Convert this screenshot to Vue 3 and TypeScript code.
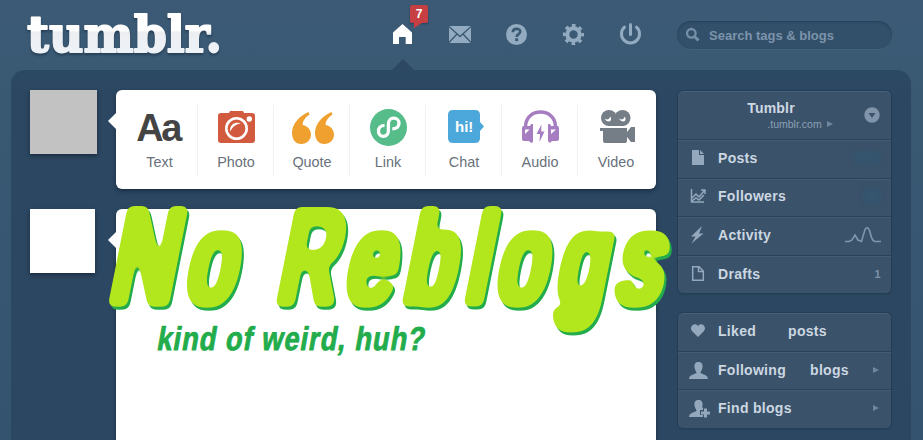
<script setup lang="ts">
interface Glyph { ch: string; x: number; sx: number; sy: number }

const tools = ['Text', 'Photo', 'Quote', 'Link', 'Chat', 'Audio', 'Video']

const title: Glyph[] = [
  { ch: 'N', x: 107.5, sx: 0.7, sy: 1.06 },
  { ch: 'o', x: 184.6, sx: 0.67, sy: 1 },
  { ch: 'R', x: 275.5, sx: 0.63, sy: 1.05 },
  { ch: 'e', x: 344, sx: 0.66, sy: 1 },
  { ch: 'b', x: 402.5, sx: 0.68, sy: 1.01 },
  { ch: 'l', x: 464.5, sx: 0.68, sy: 1.01 },
  { ch: 'o', x: 495, sx: 0.67, sy: 1 },
  { ch: 'g', x: 555.5, sx: 0.66, sy: 1 },
  { ch: 's', x: 615, sx: 0.68, sy: 1 },
]
</script>

<template>
  <div class="page">
    <header class="top">
      <svg class="logo" width="210" height="60" viewBox="20 5 210 60">
        <defs>
          <linearGradient id="logoFill" gradientUnits="userSpaceOnUse" x1="0" y1="12" x2="0" y2="54">
            <stop offset="0" stop-color="#fff" />
            <stop offset=".44" stop-color="#fff" />
            <stop offset=".48" stop-color="#eceef1" />
            <stop offset="1" stop-color="#eef3f8" />
          </linearGradient>
        </defs>
        <text x="27" y="52" textLength="195" lengthAdjust="spacingAndGlyphs" fill="url(#logoFill)" stroke="url(#logoFill)">tumblr.</text>
      </svg>
      <nav class="nav">
        <a class="item active">
          <svg width="34" height="34" viewBox="385 18 34 34"><path d="M402.500 24L412 32.500V44H405.700V37H399V44H393V32.500Z" fill="#fff" /></svg>
          <span class="badge">7</span>
          <span class="notch"></span>
        </a>
        <a class="item">
          <svg width="34" height="34" viewBox="442 18 34 34"><path d="M449 26H471V43H449Z" fill="#93abc1" /><path d="M449 26.500L460 36.500L471 26.500M449 42.500L457 34M471 42.500L463 34" fill="none" stroke="#3a5973" stroke-width="1.300" /></svg>
        </a>
        <a class="item">
          <svg width="34" height="34" viewBox="499 18 34 34"><circle cx="516.500" cy="34.500" r="10.500" fill="#93abc1" /><path d="M512.800 32.200C512.800 27.800 520.300 27.900 520.300 31.600C520.300 34.200 516.600 34 516.600 37" fill="none" stroke="#3a5973" stroke-width="2.600" /><rect x="515.200" y="38.300" width="2.900" height="2.800" fill="#3a5973" /></svg>
        </a>
        <a class="item">
          <svg width="34" height="34" viewBox="556 18 34 34"><circle cx="573.500" cy="34.500" r="6.200" fill="none" stroke="#93abc1" stroke-width="4" /><circle cx="573.500" cy="34.500" r="9.100" fill="none" stroke="#93abc1" stroke-width="3" stroke-dasharray="3.573 3.573" stroke-dashoffset="1.786" /></svg>
        </a>
        <a class="item">
          <svg width="34" height="34" viewBox="613 18 34 34"><path d="M624.500 27.200A9 9 0 1 0 636.500 27.200" fill="none" stroke="#93abc1" stroke-width="3" stroke-linecap="round" /><path d="M630.500 24.500V34.500" stroke="#93abc1" stroke-width="3" stroke-linecap="round" /></svg>
        </a>
      </nav>
      <div class="search">
        <svg width="16" height="16" viewBox="685 27 16 16"><circle cx="691.300" cy="33.300" r="4.300" fill="none" stroke="#7590a8" stroke-width="2.300" /><path d="M694.500 36.500L698.500 40.500" stroke="#7590a8" stroke-width="3" /></svg>
        <span>Search tags &amp; blogs</span>
      </div>
    </header>

    <main class="panel">
      <div class="avatars">
        <div class="avatar grey"></div>
        <div class="avatar white"></div>
      </div>

      <section class="feed">
        <div class="card composer">
          <div v-for="(t, i) in tools" :key="t" class="tool">
            <span v-if="i === 0" class="icon aa">Aa</span>
            <svg v-else-if="i === 1" class="icon" viewBox="206 105 60 44">
              <path d="M221 113H229L230 111H243L244 113H252Q255 113 255 116V140Q255 143 252 143H221Q218 143 218 140V116Q218 113 221 113Z" fill="#d25b3f" />
              <circle cx="236.500" cy="128.500" r="10.200" fill="none" stroke="#fff" stroke-width="2.600" />
              <path d="M230 131.500C229.500 123 237 121.500 241 123.500C236 124 232.500 127 230 131.500Z" fill="#fff" />
              <circle cx="249.300" cy="119" r="2.700" fill="#fff" />
            </svg>
            <svg v-else-if="i === 2" class="icon" viewBox="282 105 60 44">
              <path d="M308.500 112L309.500 114.500C305 117.500 302.500 121 302.500 125C307 125.500 311 129.500 311 134.500C311 140 306.700 144 301.500 144C295.500 144 292 139.500 292 133C292 124 299 116 308.500 112Z" fill="#efa02f" />
              <path d="M331.500 112L332.500 114.500C328 117.500 325.500 121 325.500 125C330 125.500 334 129.500 334 134.500C334 140 329.700 144 324.500 144C318.500 144 315 139.500 315 133C315 124 322 116 331.500 112Z" fill="#efa02f" />
            </svg>
            <svg v-else-if="i === 3" class="icon" viewBox="358 105 60 44">
              <circle cx="388.500" cy="127.500" r="18.500" fill="#56bc8a" />
              <path d="M384.500 125.300C380 125.300 378.500 128.500 378.500 131.200C378.500 134 380.500 136.300 383.300 136.300C386.600 136.300 388.400 133.800 388.400 130.800V124C388.400 120.500 390.500 118.200 393.700 118.200C396.800 118.200 399 120.500 399 123.300C399 126.400 396.800 128.900 392.300 128.900" fill="none" stroke="#fff" stroke-width="3.300" />
            </svg>
            <svg v-else-if="i === 4" class="icon" viewBox="434 105 60 44">
              <path d="M453 110H475Q480 110 480 115V122L484 126.500L480 131V138Q480 143 475 143H453Q448 143 448 138V115Q448 110 453 110Z" fill="#4ca7da" />
              <text x="455" y="131.500" class="hi">hi!</text>
            </svg>
            <svg v-else-if="i === 5" class="icon" viewBox="510 105 60 44">
              <path d="M525.500 127C525.500 107 555.500 107 555.500 127" fill="none" stroke="#a77dc2" stroke-width="3.500" />
              <path d="M524 126H530L531 124H533V142L531 143L529 141H524Q522 141 522 139V128Q522 126 524 126Z M551 126L550 124H548V141L550 143L552 141H557Q559 141 559 139V128Q559 126 557 126Z" fill="#a77dc2" />
              <path d="M525 129.500H529.500L525 134Z M551 129.500H556L551 134Z" fill="#fff" />
              <path d="M541.500 124.500L536.500 134H540L539.500 142L544.500 131.500H541.200Z" fill="#a77dc2" />
            </svg>
            <svg v-else class="icon" viewBox="586 105 60 44">
              <circle cx="609" cy="118" r="8" fill="#757d87" /><circle cx="622.500" cy="118" r="8" fill="#757d87" /><path d="M608 120H624V126H608Z M600 128H627V132L631 127H635V142H631L627 137V141Q627 143 625 143H605Q603 143 603 141V131H600Z" fill="#757d87" />
              <path d="M604.500 118.500Q608.500 121 610.500 116.500Q612 121 609 121.500Q606 121.500 604.500 118.500ZM619 118.500Q623 121 625 116.500Q626.500 121 623.500 121.500Q620.500 121.500 619 118.500Z" fill="#fff" />
            </svg>
            <span class="label">{{ t }}</span>
          </div>
        </div>
        <div class="card post">
          <svg class="lettering" width="580" height="175" viewBox="100 195 580 175">
            <defs>
              <filter id="roundFace" filterUnits="userSpaceOnUse" x="95" y="190" width="590" height="160" color-interpolation-filters="sRGB">
                <feMorphology in="SourceAlpha" operator="dilate" radius="3 0" />
                <feGaussianBlur stdDeviation="3" />
                <feComponentTransfer result="shape"><feFuncA type="linear" slope="9" intercept="-4.300" /></feComponentTransfer>
                <feOffset in="shape" dx="1.500" dy="3.200" result="low" />
                <feFlood flood-color="#22ac4b" />
                <feComposite in2="low" operator="in" result="green" />
                <feFlood flood-color="#b2e61d" />
                <feComposite in2="shape" operator="in" result="lime" />
                <feMerge><feMergeNode in="green" /><feMergeNode in="lime" /></feMerge>
              </filter>
            </defs>
            <g class="face" filter="url(#roundFace)">
              <text v-for="(g, i) in title" :key="i" :transform="`translate(${g.x} 301.500) skewX(-11.300) scale(${g.sx} ${g.sy})`">{{ g.ch }}</text>
            </g>
            <text class="sub" transform="translate(156 350) skewX(-10) scale(.82 1)" textLength="326">kind of weird, huh?</text>
          </svg>
        </div>
      </section>

      <aside class="side">
        <div class="box">
          <div class="blog">
            <div class="names"><strong>Tumblr</strong><small>.tumblr.com <i class="tri"></i></small></div>
            <svg class="drop" width="16" height="16" viewBox="0 0 16 16"><circle cx="8" cy="8" r="7.700" fill="#8195aa" /><path d="M4.500 6H11.500L8 11Z" fill="#3b536c" /></svg>
          </div>
          <div class="row"><svg viewBox="688 147 22 22"><path d="M692 150H699V155H704V165H692Z M700 150L704 154H700Z" /></svg><b>Posts</b><span class="smudge wide"></span></div>
          <div class="row"><svg viewBox="688 186 22 22"><path class="ln" d="M691.500 190V203H704M692 199L696 195L699 198L704.500 191.500M701 191H705V195M692 202L696 199L699 201L704 196" /></svg><b>Followers</b><span class="smudge"></span></div>
          <div class="row"><svg viewBox="688 224 22 22"><path d="M702 226L691 236.500H695.500L691.500 243.500L703.500 233.500H699L702 226Z" /></svg><b>Activity</b><svg class="spark" viewBox="844 225 38 20"><path class="ln" d="M845 241.500H849L852 240L855 235L858 240L861.500 241.500L865 229.500Q868 225 870 232Q872 241.500 875 241.500H881" /></svg></div>
          <div class="row last"><svg viewBox="688 263 22 22"><path class="ln" d="M692.700 266.700H699L703.300 271V280.300H692.700ZM698.500 267V271.500H703" /></svg><b>Drafts</b><span class="count">1</span></div>
        </div>
        <div class="box second">
          <div class="row"><svg viewBox="688 321 22 22"><path d="M698 338L692 332C688.500 327.500 695 322.500 698 327C701 322.500 707.500 327.500 704 332Z" /></svg><b class="gap1">Liked</b><b>posts</b></div>
          <div class="row"><svg viewBox="688 359 22 22"><path d="M698.500 362C701.500 362 703 364 702.500 367.500C702 370.500 700.500 371.500 700.500 373C703 374.500 708 375 708 379H689C689 375 694 374.500 696.500 373C696.500 371.500 695 370.500 694.500 367.500C694 364 695.500 362 698.500 362Z" /></svg><b class="gap2">Following</b><b>blogs</b><i class="tri end"></i></div>
          <div class="row"><svg viewBox="688 398 22 22"><path d="M698.500 401C701.500 401 703 403 702.500 406.500C702 409.500 700.500 410.500 700.500 412L701 408.500H703V411H700V416H703V418H689C689 414 694 413.500 696.500 412C696.500 410.500 695 409.500 694.500 406.500C694 403 695.500 401 698.500 401Z M704 409.500H707V412.500H710V415.500H707V418.500H704V415.500H701V412.500H704Z" /></svg><b>Find blogs</b><i class="tri end"></i></div>
        </div>
      </aside>
    </main>
  </div>
</template>

<style>
body { margin: 0; overflow: hidden; }
</style>

<style scoped>
.page { width: 923px; height: 440px; overflow: hidden; background: linear-gradient(#3c5a75, #395973 25%, #33536f); font-family: "Liberation Sans", Arial, sans-serif; display: flex; flex-direction: column; }
.top { height: 70px; flex: none; display: flex; align-items: flex-start; }
.logo { margin: 5px 0 0 20px; flex: none; overflow: visible; font: bold 51px "DejaVu Serif", serif; stroke-width: 2; stroke-linejoin: round; filter: drop-shadow(0 2px 1px rgba(22, 42, 64, .55)); }
.nav { display: flex; gap: 23px; margin: 18px 0 0 155px; }
.item { position: relative; width: 34px; height: 34px; }
.item svg { display: block; }
.badge { position: absolute; left: 25px; top: -13px; width: 18px; height: 18px; border-radius: 2px; background: #c63f43; box-shadow: 0 1px 2px #263e58; color: #fff; font: bold 12px/19px "Liberation Sans", sans-serif; text-align: center; }
.badge::after { content: ""; position: absolute; left: 4px; top: 18px; border: 0 solid transparent; border-top: 5px solid #c63f43; border-right-width: 8px; }
.notch { position: absolute; left: 6px; top: 41px; border: 12px solid transparent; border-top-width: 0; border-bottom-color: #2c4863; }
.search { width: 175px; height: 28px; margin: 21px 0 0 30px; padding: 0 32px 0 8px; border-radius: 14px; background: #33506a; box-shadow: inset 0 1px 2px #243e57, 0 1px 0 #446179; display: flex; align-items: center; gap: 8px; color: #7c93aa; font-size: 13px; font-weight: bold; white-space: nowrap; }
.search svg { flex: none; }
.panel { width: 900px; height: 370px; margin-left: 11px; border-radius: 14px 14px 0 0; background: linear-gradient(#2c4964, #2c4761 30px); display: flex; box-sizing: border-box; padding: 20px 20px 0 19px; }
.avatars { width: 86px; flex: none; display: flex; flex-direction: column; gap: 55px; }
.avatar { width: 67px; height: 64px; background: #c2c2c2; box-shadow: 0 2px 4px #192d42; }
.white { width: 65px; background: #fff; }
.feed { width: 540px; flex: none; display: flex; flex-direction: column; gap: 20px; }
.card { position: relative; background: #fff; border-radius: 6px; box-shadow: 0 2px 4px #192d42; box-sizing: border-box; }
.card::before { content: ""; position: absolute; left: -8px; top: 23px; border: 8px solid transparent; border-left-width: 0; border-right-color: #fff; }
.composer { height: 99px; flex: none; display: flex; padding: 15px 2px 0 5px; }
.tool { width: 76px; height: 72px; display: flex; flex-direction: column; align-items: center; position: relative; }
.tool + .tool { border-left: 1px solid #f0f1f2; width: 75px; }
.icon { width: 60px; height: 44px; flex: none; }
.aa { margin-right: 2px; font: bold 38px/46px "Liberation Sans", sans-serif; letter-spacing: -2.500px; color: #444; text-align: center; }
.hi { font: bold 15px "Liberation Sans", sans-serif; fill: #fff; }
.label { font-size: 14.400px; line-height: 17px; margin: 5px 0 0 1px; color: #68717c; }
.post { height: 280px; flex: none; }
.lettering { position: absolute; left: -16px; top: -14px; overflow: visible; }
.face text { font: 125px "Liberation Sans", sans-serif; stroke-linejoin: round; stroke-width: 9.500px; fill: #b2e61d; stroke: #b2e61d; }
.sub { font: bold 33px "Liberation Sans", sans-serif; fill: #22ac4b; stroke: #22ac4b; stroke-width: .900px; stroke-linejoin: round; }
.side { width: 214px; margin-left: 21px; flex: none; }
.box { box-sizing: border-box; width: 215px; border: 1px solid #243e57; border-radius: 6px; background: #3a526a; box-shadow: inset 0 1px 0 #4a6279, 0 1px 1px #29425a; display: flex; flex-direction: column; height: 204px; }
.second { margin-top: 18px; height: 117px; }
.blog { height: 48px; flex: none; display: flex; align-items: center; color: #ced8e2; }
.names { width: 186px; display: flex; flex-direction: column; align-items: center; }
.names strong { font-size: 14px; line-height: 16px; letter-spacing: .200px; margin-top: 1px; }
.names small { font-size: 10.500px; line-height: 14px; margin: 1px 0 0 58px; color: #8ca0b4; display: flex; align-items: center; gap: 5px; }
.row { flex: 1; display: flex; align-items: center; border-top: 1px solid #29435c; box-shadow: inset 0 1px 0 #415c75; padding: 0 10px 2px; font-size: 14px; letter-spacing: .300px; color: #ccd7e1; }
.row.last { padding: 1px 10px; }
.second .row:first-child { border-top: 0; box-shadow: none; }
.row svg { width: 22px; height: 22px; flex: none; margin-right: 8px; fill: #93a8bc; }
.row .ln { fill: none; stroke: #93a8bc; stroke-width: 1.500; }
.row .spark { width: 38px; height: 20px; margin: 0 -1px 0 auto; opacity: .8; }
.row .spark .ln { stroke-width: 1.600; }
.smudge { width: 18px; height: 18px; margin-left: auto; background: #35546e; filter: blur(2px); }
.wide { width: 27px; height: 14px; }
.count { margin-left: auto; font-size: 11px; font-weight: bold; color: #7d93a9; }
.gap1 { margin-right: 32px; }
.gap2 { margin-right: 24px; }
.tri { border: 3.500px solid transparent; border-right: 0; border-left: 6px solid #6f869d; }
.tri.end { margin: 0 2px 0 auto; }
</style>
